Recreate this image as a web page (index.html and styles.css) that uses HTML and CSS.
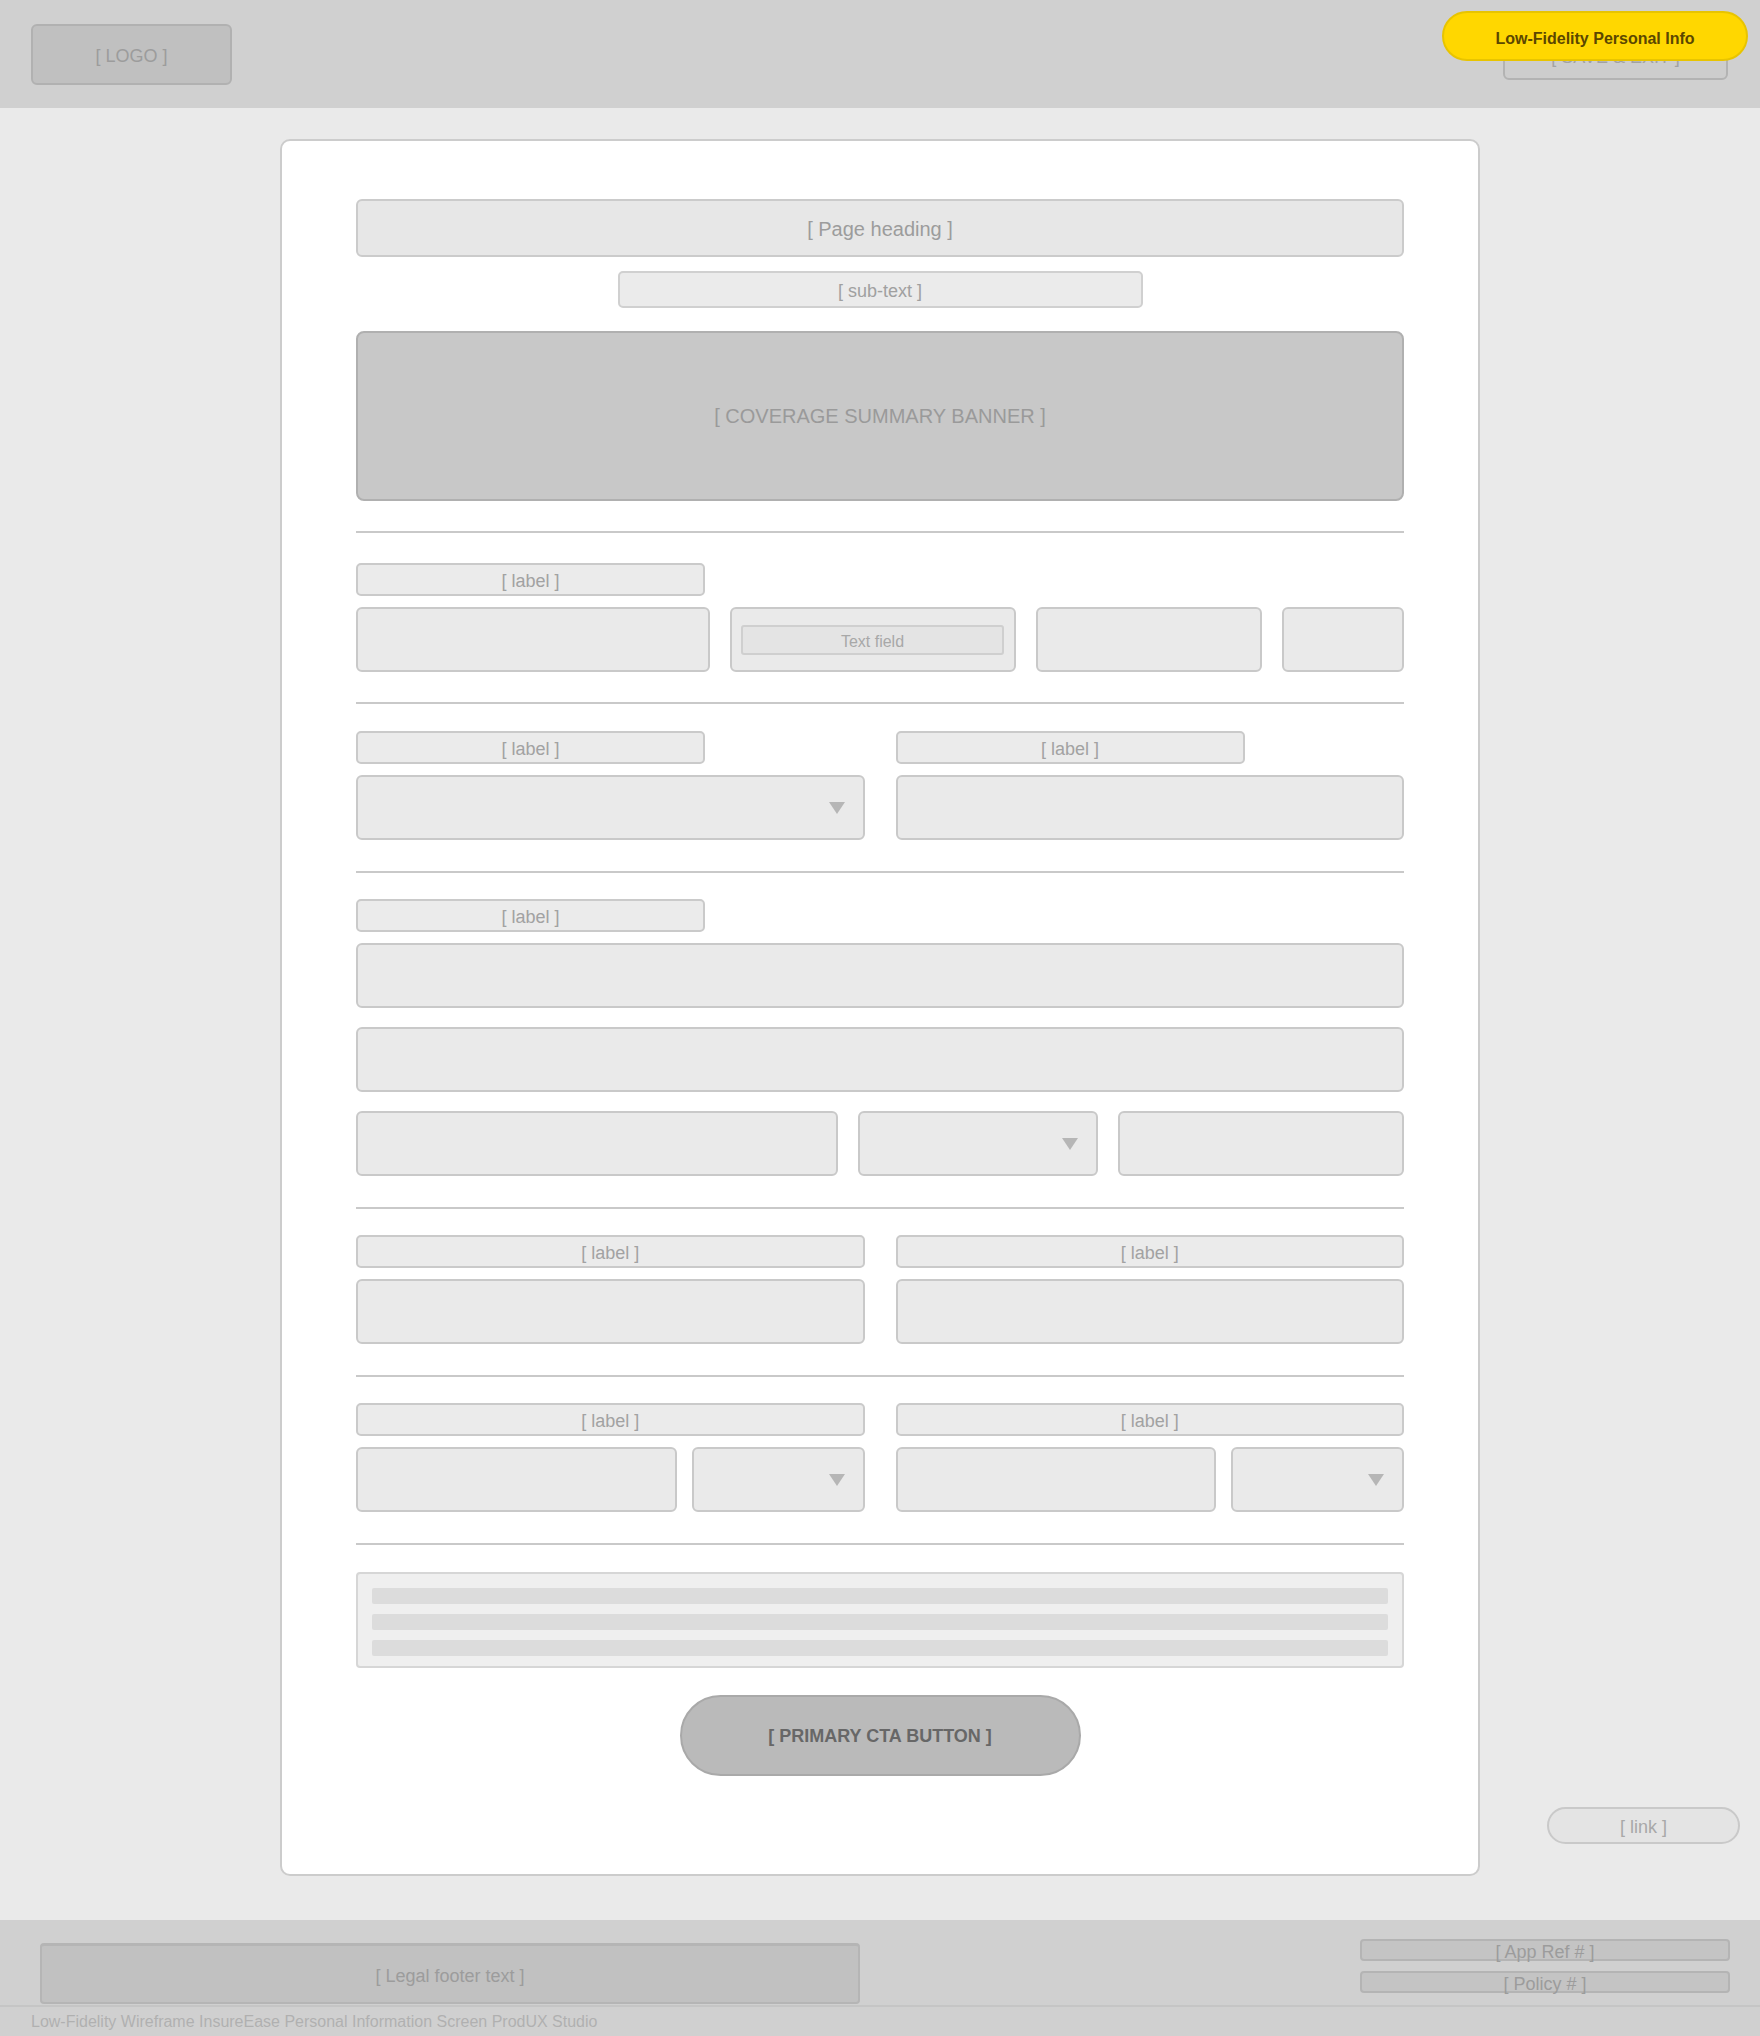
FILE: index.html
```html
<!DOCTYPE html>
<html lang="en">
<head>
<meta charset="utf-8">
<title>InsureEase – Personal Information (Low-Fidelity)</title>
<link rel="stylesheet" href="styles.css">
</head>
<body>
<header class="topbar">
  <div class="logo">[ LOGO ]</div>
  <div class="save-exit">[ SAVE &amp; EXIT ]</div>
  <div class="badge">Low-Fidelity Personal Info</div>
</header>

<main class="stage">
  <div class="card">
    <div class="heading">[ Page heading ]</div>
    <div class="subtext">[ sub-text ]</div>
    <div class="banner">[ COVERAGE SUMMARY BANNER ]</div>

    <section class="section s1">
      <div class="label short gap-below">[ label ]</div>
      <div class="row row-4">
        <div class="field"></div>
        <div class="field with-inner"><div class="inner">Text field</div></div>
        <div class="field"></div>
        <div class="field"></div>
      </div>
    </section>

    <section class="section s2">
      <div class="cols">
        <div class="col">
          <div class="label short">[ label ]</div>
          <div class="field select"></div>
        </div>
        <div class="col">
          <div class="label short">[ label ]</div>
          <div class="field"></div>
        </div>
      </div>
    </section>

    <section class="section">
      <div class="col">
        <div class="label short">[ label ]</div>
        <div class="stack">
          <div class="field"></div>
          <div class="field"></div>
          <div class="row row-3">
            <div class="field"></div>
            <div class="field select"></div>
            <div class="field"></div>
          </div>
        </div>
      </div>
    </section>

    <section class="section">
      <div class="cols">
        <div class="col">
          <div class="label">[ label ]</div>
          <div class="field"></div>
        </div>
        <div class="col">
          <div class="label">[ label ]</div>
          <div class="field"></div>
        </div>
      </div>
    </section>

    <section class="section">
      <div class="cols">
        <div class="col">
          <div class="label">[ label ]</div>
          <div class="pair">
            <div class="field"></div>
            <div class="field select"></div>
          </div>
        </div>
        <div class="col">
          <div class="label">[ label ]</div>
          <div class="pair">
            <div class="field"></div>
            <div class="field select"></div>
          </div>
        </div>
      </div>
    </section>

    <section class="section notes">
      <div class="textbox">
        <div class="bar"></div>
        <div class="bar"></div>
        <div class="bar"></div>
      </div>
    </section>

    <div class="cta">[ PRIMARY CTA BUTTON ]</div>
  </div>

  <div class="link">[ link ]</div>
</main>

<footer class="footer">
  <div class="footer-top">
    <div class="legal">[ Legal footer text ]</div>
    <div class="refs">
      <div class="ref">[ App Ref # ]</div>
      <div class="ref">[ Policy # ]</div>
    </div>
  </div>
  <div class="credit">Low-Fidelity Wireframe InsureEase Personal Information Screen ProdUX Studio</div>
</footer>
</body>
</html>
```

FILE: styles.css
```css
* {
  box-sizing: border-box;
}

html,
body {
  margin: 0;
  padding: 0;
}

body {
  font-family: "Liberation Sans", Arial, Helvetica, sans-serif;
  background: #eaeaea;
  color: #9c9c9c;
  width: 1760px;
}

/* ---------- header ---------- */
.topbar {
  position: relative;
  height: 108px;
  background: #d0d0d0;
  display: flex;
  align-items: center;
  justify-content: space-between;
  padding: 0 32px 0 31px;
}

.logo {
  width: 201px;
  height: 61px;
  background: #c0c0c0;
  border: 2px solid #b1b1b1;
  border-radius: 6px;
  display: flex;
  align-items: center;
  justify-content: center;
  padding-top: 4px;
  font-size: 18px;
  color: #9c9c9c;
}

.save-exit {
  width: 225px;
  height: 50px;
  margin-top: 2px;
  background: #cdcdcd;
  border: 2px solid #b3b3b3;
  border-radius: 6px;
  display: flex;
  align-items: center;
  justify-content: center;
  padding-top: 4px;
  font-size: 18px;
  color: #a2a2a2;
}

.badge {
  position: absolute;
  top: 11px;
  right: 12px;
  width: 306px;
  height: 50px;
  background: #ffd700;
  border: 2px solid #e8c400;
  border-radius: 25px;
  display: flex;
  align-items: center;
  justify-content: center;
  padding-top: 5px;
  font-size: 16px;
  font-weight: bold;
  color: #5b4700;
  z-index: 2;
}

/* ---------- main stage ---------- */
.stage {
  position: relative;
  padding: 31px 0 44px;
  background: #eaeaea;
}

.card {
  width: 1200px;
  margin: 0 auto;
  background: #ffffff;
  border: 2px solid #cccccc;
  border-radius: 10px;
  padding: 58px 74px 98px;
}

.heading {
  height: 58px;
  background: #e7e7e7;
  border: 2px solid #cbcbcb;
  border-radius: 6px;
  display: flex;
  align-items: center;
  justify-content: center;
  padding-top: 2px;
  font-size: 20px;
  color: #9c9c9c;
}

.subtext {
  width: 525px;
  height: 37px;
  margin: 14px auto 0;
  background: #ebebeb;
  border: 2px solid #d0d0d0;
  border-radius: 5px;
  display: flex;
  align-items: center;
  justify-content: center;
  padding-top: 4px;
  font-size: 18px;
  color: #a0a0a0;
}

.banner {
  height: 170px;
  margin-top: 23px;
  background: #c8c8c8;
  border: 2px solid #b0b0b0;
  border-radius: 8px;
  display: flex;
  align-items: center;
  justify-content: center;
  font-size: 20px;
  color: #9a9a9a;
}

/* ---------- form sections ---------- */
.section {
  border-top: 2px solid #c9c9c9;
  margin-top: 31px;
  padding-top: 26px;
}

.section.s1 {
  margin-top: 30px;
  padding-top: 30px;
}

.section.s2 {
  margin-top: 30px;
  padding-top: 27px;
}

.section.notes {
  padding-top: 27px;
}

.label {
  height: 33px;
  background: #ebebeb;
  border: 2px solid #cacaca;
  border-radius: 5px;
  display: flex;
  align-items: center;
  justify-content: center;
  padding-top: 4px;
  font-size: 18px;
  color: #a2a2a2;
}

.label.short {
  width: 349px;
}

.label.gap-below {
  margin-bottom: 11px;
}

.field {
  position: relative;
  height: 65px;
  background: #eaeaea;
  border: 2px solid #c9c9c9;
  border-radius: 6px;
}

.field.select::after {
  content: "";
  position: absolute;
  right: 18px;
  top: 50%;
  transform: translateY(-50%);
  width: 0;
  height: 0;
  border-left: 8px solid transparent;
  border-right: 8px solid transparent;
  border-top: 12px solid #b6b6b6;
}

.field.with-inner {
  display: flex;
  align-items: center;
  padding: 0 10px 0 9px;
}

.inner {
  flex: 1;
  height: 30px;
  background: #e4e4e4;
  border: 2px solid #cfcfcf;
  border-radius: 3px;
  display: flex;
  align-items: center;
  justify-content: center;
  padding-top: 4px;
  font-size: 16px;
  color: #a8a8a8;
}

.row {
  display: grid;
  gap: 20px;
}

.row-4 {
  grid-template-columns: 354px 286px 226px 1fr;
}

.row-3 {
  grid-template-columns: 482px 240px 1fr;
}

.cols {
  display: grid;
  grid-template-columns: 1fr 1fr;
  column-gap: 31px;
}

.col {
  display: flex;
  flex-direction: column;
  gap: 11px;
}

.stack {
  display: flex;
  flex-direction: column;
  gap: 19px;
}

.pair {
  display: grid;
  grid-template-columns: 1fr 173px;
  gap: 15px;
}

/* ---------- notes / disclaimer ---------- */
.textbox {
  background: #efefef;
  border: 2px solid #d6d6d6;
  border-radius: 4px;
  padding: 14px 14px 10px;
  display: flex;
  flex-direction: column;
  gap: 10px;
}

.bar {
  height: 16px;
  background: #dcdcdc;
  border-radius: 2px;
}

/* ---------- CTA ---------- */
.cta {
  width: 401px;
  height: 81px;
  margin: 27px auto 0;
  background: #bababa;
  border: 2px solid #a9a9a9;
  border-radius: 41px;
  display: flex;
  align-items: center;
  justify-content: center;
  padding-top: 2px;
  font-size: 18px;
  font-weight: bold;
  color: #676767;
}

.link {
  position: absolute;
  right: 20px;
  bottom: 76px;
  width: 193px;
  height: 37px;
  background: #e4e4e4;
  border: 2px solid #c9c9c9;
  border-radius: 19px;
  display: flex;
  align-items: center;
  justify-content: center;
  padding-top: 4px;
  font-size: 18px;
  color: #a8a8a8;
}

/* ---------- footer ---------- */
.footer {
  height: 116px;
  background: #d0d0d0;
}

.footer-top {
  height: 85px;
  display: flex;
  justify-content: space-between;
  align-items: flex-start;
  padding: 19px 30px 0 40px;
}

.legal {
  width: 820px;
  height: 61px;
  margin-top: 4px;
  background: #c1c1c1;
  border: 2px solid #b5b5b5;
  border-top-width: 3px;
  border-radius: 4px;
  display: flex;
  align-items: center;
  justify-content: center;
  padding-top: 4px;
  font-size: 18px;
  color: #9c9c9c;
}

.refs {
  width: 370px;
  display: flex;
  flex-direction: column;
  gap: 10px;
}

.ref {
  height: 22px;
  background: #c4c4c4;
  border: 2px solid #b4b4b4;
  border-radius: 4px;
  display: flex;
  align-items: center;
  justify-content: center;
  padding-top: 4px;
  font-size: 18px;
  line-height: 1;
  color: #9c9c9c;
  overflow: visible;
}

.credit {
  border-top: 2px solid #c5c5c5;
  height: 31px;
  padding-left: 31px;
  display: flex;
  align-items: center;
  font-size: 16px;
  color: #b0b0b0;
}
```
